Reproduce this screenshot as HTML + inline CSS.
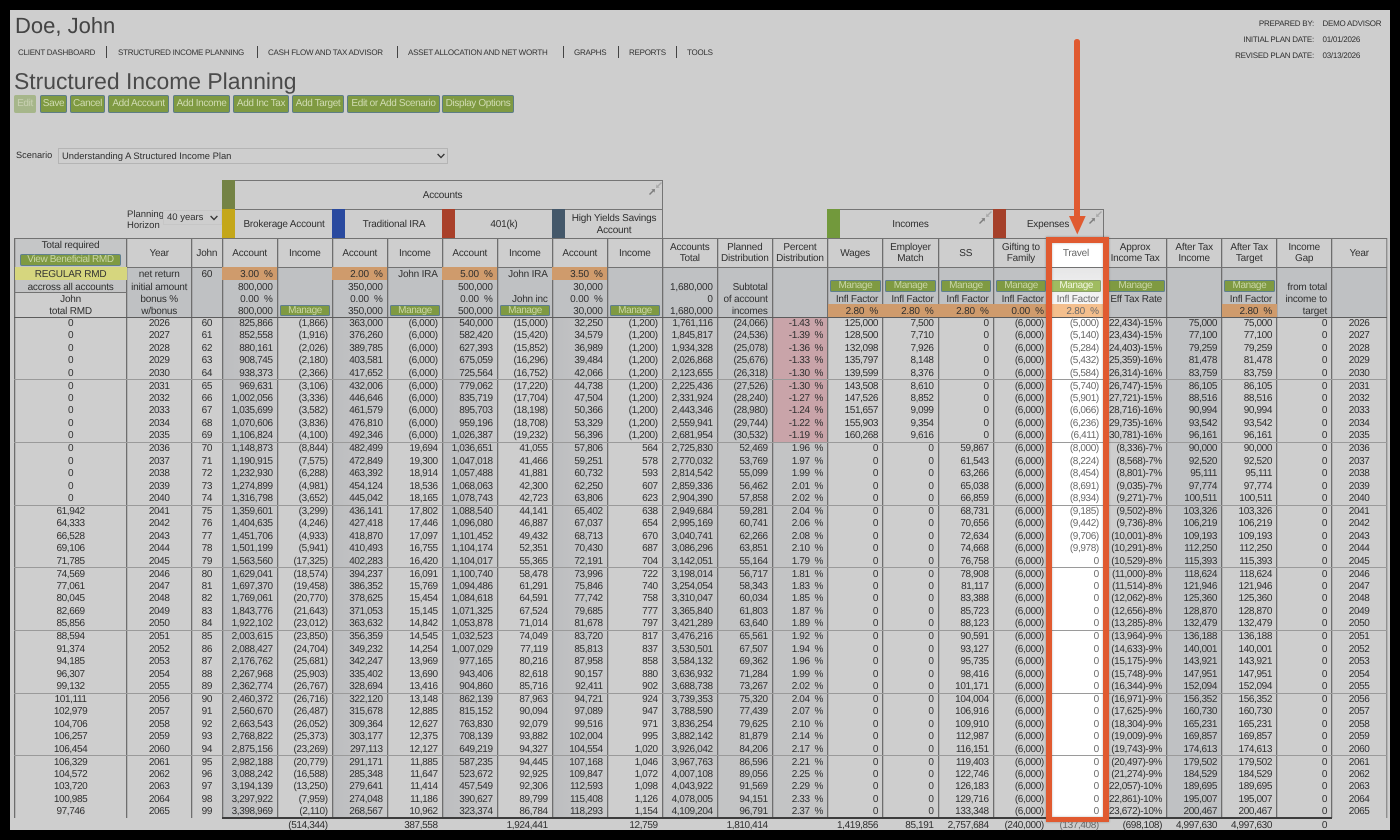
<!DOCTYPE html>
<html><head><meta charset="utf-8"><title>Structured Income Planning</title>
<style>
html,body{margin:0;padding:0;background:#000;width:1400px;height:840px;overflow:hidden}
body{font-family:"Liberation Sans",Arial,sans-serif;color:#2f2f2f;position:relative;text-rendering:geometricPrecision}
#p{position:absolute;left:10px;top:10px;width:1380px;height:820px;background:#cecece}
.a{position:absolute;white-space:nowrap}
.btn{position:absolute;top:95px;height:18px;box-sizing:border-box;background:#7f9a42;border:1px solid #5d7d86;border-radius:2px;color:#d0dbb2;font-size:10px;letter-spacing:-.35px;line-height:16px;text-align:center;white-space:nowrap}
.nav{position:absolute;top:47px;font-size:8px;letter-spacing:-.25px;line-height:11px;color:#333;white-space:nowrap}
.sep{position:absolute;top:46px;width:1px;height:12px;background:#444}
.bg{position:absolute}
.v{position:absolute;top:238px;height:580px;width:1px;background:#6e6e6e;box-shadow:.6px 0 0 rgba(110,110,110,.45)}
.hl{position:absolute;left:14px;width:1373px;height:1px;background:#727272}
.dv{position:absolute;left:14px;width:1373px;height:1px;background:#9a9a9a}
.g,.h{position:absolute;left:14.5px;width:1372.2px;display:grid;grid-template-columns:112.2px 65px 30.3px 55.3px 55px 55px 55px 55px 55px 55px 55px 55px 55px 55.3px 55.1px 55.5px 55.1px 55.2px 55px 63.2px 55px 55px 55px 55px;text-align:right}
.g{grid-auto-rows:12.4px;line-height:14px;font-size:10px;letter-spacing:-.38px}
.g>i,.h>i{font-style:normal;box-sizing:border-box;padding-right:4.6px;white-space:nowrap;min-width:0}
.g>i:nth-child(24n+1),.g>i:nth-child(24n+2),.g>i:nth-child(24n+3),.g>i:nth-child(24n){text-align:center;padding:0}
.g>i:nth-child(24n+19){color:#696969}
.g.f{letter-spacing:-.2px;line-height:15px}
.o{background:#cf9b6c}
.ob{background:#f4bf8d}
.y{background:#d6d67e;color:#333}
.g>i.m{padding:0}
.m b{display:block;font-weight:400;height:11.4px;line-height:10px;box-sizing:border-box;margin:.5px 2px 0 2.5px;background:#7f9a42;border:1px solid #5f7f8f;border-radius:1.5px;color:#c9d6a6;text-align:center;font-size:10px;letter-spacing:-.4px}
.m.t b{background:#a0bc60;border-color:#8aa06a;color:#f0f5df}
.h{top:239px;grid-template-rows:28.8px;font-size:10px;letter-spacing:-.2px;line-height:11.4px}
.h>i{display:flex;align-items:center;justify-content:center;text-align:center;padding:0}
.cap{position:absolute;box-sizing:border-box;border:1px solid #757575;background:#cecece;font-size:10px;letter-spacing:-.2px;line-height:11.4px;text-align:center;display:flex;align-items:center;justify-content:center;padding-top:1px}
.bar{position:absolute;width:13px}
.pr{font-size:8px;letter-spacing:-.25px;line-height:11px}
svg{position:absolute;overflow:visible}
</style></head><body>
<div id="p"></div>

<div class="a" style="left:15px;top:13px;font-size:22px;line-height:26px;color:#444">Doe, John</div>
<div class="nav" style="left:18px">CLIENT DASHBOARD</div><div class="sep" style="left:106px"></div>
<div class="nav" style="left:118px">STRUCTURED INCOME PLANNING</div><div class="sep" style="left:257px"></div>
<div class="nav" style="left:268px">CASH FLOW AND TAX ADVISOR</div><div class="sep" style="left:397px"></div>
<div class="nav" style="left:408px">ASSET ALLOCATION AND NET WORTH</div><div class="sep" style="left:563px"></div>
<div class="nav" style="left:574px">GRAPHS</div><div class="sep" style="left:618px"></div>
<div class="nav" style="left:629px">REPORTS</div><div class="sep" style="left:676px"></div>
<div class="nav" style="left:687px">TOOLS</div>

<div class="a pr" style="right:86px;top:18px">PREPARED BY:</div>
<div class="a pr" style="left:1322.5px;top:18px">DEMO ADVISOR</div>
<div class="a pr" style="right:86px;top:34px">INITIAL PLAN DATE:</div>
<div class="a pr" style="left:1322.5px;top:34px">01/01/2026</div>
<div class="a pr" style="right:86px;top:50px">REVISED PLAN DATE:</div>
<div class="a pr" style="left:1322.5px;top:50px">03/13/2026</div>

<div class="a" style="left:14px;top:68px;font-size:22.9px;line-height:27px;color:#4a4a4a">Structured Income Planning</div>

<div class="btn" style="left:14px;width:22px;background:#a6b68a;border-color:#a6b68a;color:#c9d1b3">Edit</div>
<div class="btn" style="left:40px;width:27px">Save</div>
<div class="btn" style="left:70px;width:35px">Cancel</div>
<div class="btn" style="left:108px;width:61px">Add Account</div>
<div class="btn" style="left:173px;width:57px">Add Income</div>
<div class="btn" style="left:233px;width:56px">Add Inc Tax</div>
<div class="btn" style="left:292px;width:52px">Add Target</div>
<div class="btn" style="left:347px;width:93px">Edit or Add Scenario</div>
<div class="btn" style="left:442px;width:72px">Display Options</div>

<div class="a" style="left:16px;top:149px;font-size:9.2px;line-height:12px">Scenario</div>
<div class="a" style="left:58px;top:148px;width:390px;height:16px;box-sizing:border-box;border:1px solid #b4b4b4;font-size:9.4px;line-height:14px;padding-left:3px">Understanding A Structured Income Plan</div>
<svg style="left:437px;top:153px" width="8" height="6" viewBox="0 0 8 6"><path d="M.6 1 L4 4.6 L7.4 1" fill="none" stroke="#333" stroke-width="1.3"/></svg>

<div class="a" style="left:127px;top:209px;font-size:9.5px;line-height:11.2px">Planning<br>Horizon</div>
<div class="a" style="left:163px;top:210px;width:59px;height:15px;box-sizing:border-box;border:1px solid #c6c6c6;font-size:9.5px;line-height:13px;padding-left:3px">40 years</div>
<svg style="left:210px;top:215px" width="8" height="6" viewBox="0 0 8 6"><path d="M.6 1 L4 4.6 L7.4 1" fill="none" stroke="#333" stroke-width="1.3"/></svg>

<!-- group captions -->
<div class="cap" style="left:222px;top:180px;width:441px;height:30px">Accounts</div>
<div class="cap" style="left:222px;top:209px;width:111px;height:30px;padding-left:13px">Brokerage Account</div>
<div class="cap" style="left:332px;top:209px;width:111px;height:30px;padding-left:13px">Traditional IRA</div>
<div class="cap" style="left:442px;top:209px;width:111px;height:30px;padding-left:13px">401(k)</div>
<div class="cap" style="left:552px;top:209px;width:111px;height:30px;padding-left:13px">High Yields Savings<br>Account</div>
<div class="cap" style="left:827px;top:209px;width:167px;height:30px">Incomes</div>
<div class="cap" style="left:993px;top:209px;width:111px;height:30px;padding-left:13px;padding-right:14px">Expenses</div>
<div class="bar" style="left:222px;top:180px;height:29px;background:#748345"></div>
<div class="bar" style="left:222px;top:209px;height:29px;background:#c4a71a"></div>
<div class="bar" style="left:332px;top:209px;height:29px;background:#2a4a9f"></div>
<div class="bar" style="left:442px;top:209px;height:29px;background:#a9402a"></div>
<div class="bar" style="left:552px;top:209px;height:29px;background:#44586a"></div>
<div class="bar" style="left:827px;top:209px;height:29px;background:#72993c"></div>
<div class="bar" style="left:993px;top:209px;height:29px;background:#a5402a"></div>
<svg style="left:648.5px;top:182px" width="13" height="13" viewBox="0 0 13 13"><path d="M.5 12.5L4 9" stroke="#7d7d7d" stroke-width="1.4" fill="none"/><path d="M6 7L2.4 7.4L5.6 10.6Z" fill="#7d7d7d"/><path d="M12.5 .5L9 4" stroke="#a8a8a8" stroke-width="1.4" fill="none"/><path d="M7 6L10.6 5.6L7.4 2.4Z" fill="#a8a8a8"/></svg>
<svg style="left:979px;top:211px" width="13" height="13" viewBox="0 0 13 13"><path d="M.5 12.5L4 9" stroke="#7d7d7d" stroke-width="1.4" fill="none"/><path d="M6 7L2.4 7.4L5.6 10.6Z" fill="#7d7d7d"/><path d="M12.5 .5L9 4" stroke="#a8a8a8" stroke-width="1.4" fill="none"/><path d="M7 6L10.6 5.6L7.4 2.4Z" fill="#a8a8a8"/></svg>
<svg style="left:1088.5px;top:211px" width="13" height="13" viewBox="0 0 13 13"><path d="M.5 12.5L4 9" stroke="#7d7d7d" stroke-width="1.4" fill="none"/><path d="M6 7L2.4 7.4L5.6 10.6Z" fill="#7d7d7d"/><path d="M12.5 .5L9 4" stroke="#a8a8a8" stroke-width="1.4" fill="none"/><path d="M7 6L10.6 5.6L7.4 2.4Z" fill="#a8a8a8"/></svg>

<!-- table backgrounds -->
<div class="bg" style="left:14px;top:238px;width:113px;height:29px;background:#c5c6c7"></div>
<div class="bg" style="left:127px;top:267px;width:1260px;height:50px;background:#bfc1c3"></div>
<div class="bg" style="left:14px;top:279px;width:113px;height:13px;background:#c3c4c5"></div>
<div class="bg" style="left:222px;top:317px;width:55px;height:501px;background:linear-gradient(90deg,#bcbdbf,#c8c9ca)"></div>
<div class="bg" style="left:332px;top:317px;width:55px;height:501px;background:linear-gradient(90deg,#bcbdbf,#c8c9ca)"></div>
<div class="bg" style="left:442px;top:317px;width:55px;height:501px;background:linear-gradient(90deg,#bcbdbf,#c8c9ca)"></div>
<div class="bg" style="left:552px;top:317px;width:55px;height:501px;background:linear-gradient(90deg,#bcbdbf,#c8c9ca)"></div>
<div class="bg" style="left:662px;top:317px;width:165px;height:501px;background:#c3c4c5"></div>
<div class="bg" style="left:772px;top:317px;width:55px;height:125px;background:#c9a4a9"></div>
<div class="bg" style="left:1167px;top:317px;width:55px;height:501px;background:#bfc1c3"></div>

<!-- travel highlight -->
<div class="bg" style="left:1049px;top:238px;width:55px;height:580px;background:#fff"></div>
<div class="bg" style="left:1049px;top:267px;width:55px;height:38px;background:linear-gradient(#e6e6e7,#f6f6f6)"></div>

<!-- grid lines -->
<div class="v" style="left:14px"></div><div class="v" style="left:126px"></div><div class="v" style="left:191px"></div><div class="v" style="left:222px"></div><div class="v" style="left:277px"></div><div class="v" style="left:332px"></div><div class="v" style="left:387px"></div><div class="v" style="left:442px"></div><div class="v" style="left:497px"></div><div class="v" style="left:552px"></div><div class="v" style="left:607px"></div><div class="v" style="left:662px"></div><div class="v" style="left:717px"></div><div class="v" style="left:772px"></div><div class="v" style="left:827px"></div><div class="v" style="left:882px"></div><div class="v" style="left:938px"></div><div class="v" style="left:993px"></div><div class="v" style="left:1166px"></div><div class="v" style="left:1221px"></div><div class="v" style="left:1276px"></div><div class="v" style="left:1331px"></div><div class="v" style="left:1386px;background:#8f8f8f"></div>
<div class="hl" style="top:238px"></div>
<div class="hl" style="top:267px"></div>
<div class="hl" style="top:317px;background:#5c5c5c"></div>
<div class="bg" style="left:14px;top:292px;width:113px;height:1px;background:#727272"></div>
<div class="dv" style="top:379px"></div><div class="dv" style="top:442px"></div><div class="dv" style="top:505px"></div><div class="dv" style="top:567px"></div><div class="dv" style="top:630px"></div><div class="dv" style="top:693px"></div><div class="dv" style="top:755px"></div>
<div class="bg" style="left:222px;top:817px;width:1110px;height:2px;background:#3c3c3c"></div>

<!-- col 1 header -->
<div class="a" style="left:14px;width:113px;top:240px;text-align:center;font-size:10px;letter-spacing:-.2px;line-height:12px">Total required</div>
<div class="btn" style="left:20px;top:254px;width:101px;height:12px;line-height:10px;border-color:#5f7f8f;color:#c9d6a6">View Beneficial RMD</div>

<!-- column headers -->
<div class="h">
<i></i><i>Year</i><i>John</i><i>Account</i><i>Income</i><i>Account</i><i>Income</i><i>Account</i><i>Income</i><i>Account</i><i>Income</i><i>Accounts<br>Total</i><i>Planned<br>Distribution</i><i>Percent<br>Distribution</i><i>Wages</i><i>Employer<br>Match</i><i>SS</i><i>Gifting to<br>Family</i><i style="color:#666">Travel</i><i>Approx<br>Income Tax</i><i>After Tax<br>Income</i><i>After Tax<br>Target</i><i>Income<br>Gap</i><i>Year</i>
</div>

<!-- header data rows -->
<div class="g f" style="top:267.3px">
<i class="y">REGULAR RMD</i><i>net return</i><i>60</i><i class="o">3.00&nbsp;&nbsp;%</i><i></i><i class="o">2.00&nbsp;&nbsp;%</i><i>John IRA</i><i class="o">5.00&nbsp;&nbsp;%</i><i>John IRA</i><i class="o">3.50&nbsp;&nbsp;%</i><i></i><i></i><i></i><i></i><i></i><i></i><i></i><i></i><i></i><i></i><i></i><i></i><i></i><i></i>
<i>accross all accounts</i><i>initial amount</i><i></i><i>800,000</i><i></i><i>350,000</i><i></i><i>500,000</i><i></i><i>30,000</i><i></i><i>1,680,000</i><i>Subtotal</i><i></i><i class="m"><b>Manage</b></i><i class="m"><b>Manage</b></i><i class="m"><b>Manage</b></i><i class="m"><b>Manage</b></i><i class="m t"><b>Manage</b></i><i class="m"><b>Manage</b></i><i></i><i class="m"><b>Manage</b></i><i>from total</i><i></i>
<i>John</i><i>bonus %</i><i></i><i>0.00&nbsp;&nbsp;%</i><i></i><i>0.00&nbsp;&nbsp;%</i><i></i><i>0.00&nbsp;&nbsp;%</i><i>John inc</i><i>0.00&nbsp;&nbsp;%</i><i></i><i>0</i><i>of account</i><i></i><i>Infl Factor</i><i>Infl Factor</i><i>Infl Factor</i><i>Infl Factor</i><i>Infl Factor</i><i>Eff Tax Rate</i><i></i><i>Infl Factor</i><i>income to</i><i></i>
<i>total RMD</i><i>w/bonus</i><i></i><i>800,000</i><i class="m"><b>Manage</b></i><i>350,000</i><i class="m"><b>Manage</b></i><i>500,000</i><i class="m"><b>Manage</b></i><i>30,000</i><i class="m"><b>Manage</b></i><i>1,680,000</i><i>incomes</i><i></i><i class="o">2.80&nbsp;&nbsp;%</i><i class="o">2.80&nbsp;&nbsp;%</i><i class="o">2.80&nbsp;&nbsp;%</i><i class="o">0.00&nbsp;&nbsp;%</i><i class="ob">2.80&nbsp;&nbsp;%</i><i></i><i></i><i class="o">2.80&nbsp;&nbsp;%</i><i>target</i><i></i>
</div>

<!-- data -->
<div class="g" style="top:317px">
<i>0</i><i>2026</i><i>60</i><i>825,866</i><i>(1,866)</i><i>363,000</i><i>(6,000)</i><i>540,000</i><i>(15,000)</i><i>32,250</i><i>(1,200)</i><i>1,761,116</i><i>(24,066)</i><i>-1.43&nbsp;&nbsp;%</i><i>125,000</i><i>7,500</i><i>0</i><i>(6,000)</i><i>(5,000)</i><i>(22,434)-15%</i><i>75,000</i><i>75,000</i><i>0</i><i>2026</i>
<i>0</i><i>2027</i><i>61</i><i>852,558</i><i>(1,916)</i><i>376,260</i><i>(6,000)</i><i>582,420</i><i>(15,420)</i><i>34,579</i><i>(1,200)</i><i>1,845,817</i><i>(24,536)</i><i>-1.39&nbsp;&nbsp;%</i><i>128,500</i><i>7,710</i><i>0</i><i>(6,000)</i><i>(5,140)</i><i>(23,434)-15%</i><i>77,100</i><i>77,100</i><i>0</i><i>2027</i>
<i>0</i><i>2028</i><i>62</i><i>880,161</i><i>(2,026)</i><i>389,785</i><i>(6,000)</i><i>627,393</i><i>(15,852)</i><i>36,989</i><i>(1,200)</i><i>1,934,328</i><i>(25,078)</i><i>-1.36&nbsp;&nbsp;%</i><i>132,098</i><i>7,926</i><i>0</i><i>(6,000)</i><i>(5,284)</i><i>(24,403)-15%</i><i>79,259</i><i>79,259</i><i>0</i><i>2028</i>
<i>0</i><i>2029</i><i>63</i><i>908,745</i><i>(2,180)</i><i>403,581</i><i>(6,000)</i><i>675,059</i><i>(16,296)</i><i>39,484</i><i>(1,200)</i><i>2,026,868</i><i>(25,676)</i><i>-1.33&nbsp;&nbsp;%</i><i>135,797</i><i>8,148</i><i>0</i><i>(6,000)</i><i>(5,432)</i><i>(25,359)-16%</i><i>81,478</i><i>81,478</i><i>0</i><i>2029</i>
<i>0</i><i>2030</i><i>64</i><i>938,373</i><i>(2,366)</i><i>417,652</i><i>(6,000)</i><i>725,564</i><i>(16,752)</i><i>42,066</i><i>(1,200)</i><i>2,123,655</i><i>(26,318)</i><i>-1.30&nbsp;&nbsp;%</i><i>139,599</i><i>8,376</i><i>0</i><i>(6,000)</i><i>(5,584)</i><i>(26,314)-16%</i><i>83,759</i><i>83,759</i><i>0</i><i>2030</i>
</div>
<div class="g" style="top:379.67px">
<i>0</i><i>2031</i><i>65</i><i>969,631</i><i>(3,106)</i><i>432,006</i><i>(6,000)</i><i>779,062</i><i>(17,220)</i><i>44,738</i><i>(1,200)</i><i>2,225,436</i><i>(27,526)</i><i>-1.30&nbsp;&nbsp;%</i><i>143,508</i><i>8,610</i><i>0</i><i>(6,000)</i><i>(5,740)</i><i>(26,747)-15%</i><i>86,105</i><i>86,105</i><i>0</i><i>2031</i>
<i>0</i><i>2032</i><i>66</i><i>1,002,056</i><i>(3,336)</i><i>446,646</i><i>(6,000)</i><i>835,719</i><i>(17,704)</i><i>47,504</i><i>(1,200)</i><i>2,331,924</i><i>(28,240)</i><i>-1.27&nbsp;&nbsp;%</i><i>147,526</i><i>8,852</i><i>0</i><i>(6,000)</i><i>(5,901)</i><i>(27,721)-15%</i><i>88,516</i><i>88,516</i><i>0</i><i>2032</i>
<i>0</i><i>2033</i><i>67</i><i>1,035,699</i><i>(3,582)</i><i>461,579</i><i>(6,000)</i><i>895,703</i><i>(18,198)</i><i>50,366</i><i>(1,200)</i><i>2,443,346</i><i>(28,980)</i><i>-1.24&nbsp;&nbsp;%</i><i>151,657</i><i>9,099</i><i>0</i><i>(6,000)</i><i>(6,066)</i><i>(28,716)-16%</i><i>90,994</i><i>90,994</i><i>0</i><i>2033</i>
<i>0</i><i>2034</i><i>68</i><i>1,070,606</i><i>(3,836)</i><i>476,810</i><i>(6,000)</i><i>959,196</i><i>(18,708)</i><i>53,329</i><i>(1,200)</i><i>2,559,941</i><i>(29,744)</i><i>-1.22&nbsp;&nbsp;%</i><i>155,903</i><i>9,354</i><i>0</i><i>(6,000)</i><i>(6,236)</i><i>(29,735)-16%</i><i>93,542</i><i>93,542</i><i>0</i><i>2034</i>
<i>0</i><i>2035</i><i>69</i><i>1,106,824</i><i>(4,100)</i><i>492,346</i><i>(6,000)</i><i>1,026,387</i><i>(19,232)</i><i>56,396</i><i>(1,200)</i><i>2,681,954</i><i>(30,532)</i><i>-1.19&nbsp;&nbsp;%</i><i>160,268</i><i>9,616</i><i>0</i><i>(6,000)</i><i>(6,411)</i><i>(30,781)-16%</i><i>96,161</i><i>96,161</i><i>0</i><i>2035</i>
</div>
<div class="g" style="top:442.34px">
<i>0</i><i>2036</i><i>70</i><i>1,148,873</i><i>(8,844)</i><i>482,499</i><i>19,694</i><i>1,036,651</i><i>41,055</i><i>57,806</i><i>564</i><i>2,725,830</i><i>52,469</i><i>1.96&nbsp;&nbsp;%</i><i>0</i><i>0</i><i>59,867</i><i>(6,000)</i><i>(8,000)</i><i>(8,336)-7%</i><i>90,000</i><i>90,000</i><i>0</i><i>2036</i>
<i>0</i><i>2037</i><i>71</i><i>1,190,915</i><i>(7,575)</i><i>472,849</i><i>19,300</i><i>1,047,018</i><i>41,466</i><i>59,251</i><i>578</i><i>2,770,032</i><i>53,769</i><i>1.97&nbsp;&nbsp;%</i><i>0</i><i>0</i><i>61,543</i><i>(6,000)</i><i>(8,224)</i><i>(8,568)-7%</i><i>92,520</i><i>92,520</i><i>0</i><i>2037</i>
<i>0</i><i>2038</i><i>72</i><i>1,232,930</i><i>(6,288)</i><i>463,392</i><i>18,914</i><i>1,057,488</i><i>41,881</i><i>60,732</i><i>593</i><i>2,814,542</i><i>55,099</i><i>1.99&nbsp;&nbsp;%</i><i>0</i><i>0</i><i>63,266</i><i>(6,000)</i><i>(8,454)</i><i>(8,801)-7%</i><i>95,111</i><i>95,111</i><i>0</i><i>2038</i>
<i>0</i><i>2039</i><i>73</i><i>1,274,899</i><i>(4,981)</i><i>454,124</i><i>18,536</i><i>1,068,063</i><i>42,300</i><i>62,250</i><i>607</i><i>2,859,336</i><i>56,462</i><i>2.01&nbsp;&nbsp;%</i><i>0</i><i>0</i><i>65,038</i><i>(6,000)</i><i>(8,691)</i><i>(9,035)-7%</i><i>97,774</i><i>97,774</i><i>0</i><i>2039</i>
<i>0</i><i>2040</i><i>74</i><i>1,316,798</i><i>(3,652)</i><i>445,042</i><i>18,165</i><i>1,078,743</i><i>42,723</i><i>63,806</i><i>623</i><i>2,904,390</i><i>57,858</i><i>2.02&nbsp;&nbsp;%</i><i>0</i><i>0</i><i>66,859</i><i>(6,000)</i><i>(8,934)</i><i>(9,271)-7%</i><i>100,511</i><i>100,511</i><i>0</i><i>2040</i>
</div>
<div class="g" style="top:505px">
<i>61,942</i><i>2041</i><i>75</i><i>1,359,601</i><i>(3,299)</i><i>436,141</i><i>17,802</i><i>1,088,540</i><i>44,141</i><i>65,402</i><i>638</i><i>2,949,684</i><i>59,281</i><i>2.04&nbsp;&nbsp;%</i><i>0</i><i>0</i><i>68,731</i><i>(6,000)</i><i>(9,185)</i><i>(9,502)-8%</i><i>103,326</i><i>103,326</i><i>0</i><i>2041</i>
<i>64,333</i><i>2042</i><i>76</i><i>1,404,635</i><i>(4,246)</i><i>427,418</i><i>17,446</i><i>1,096,080</i><i>46,887</i><i>67,037</i><i>654</i><i>2,995,169</i><i>60,741</i><i>2.06&nbsp;&nbsp;%</i><i>0</i><i>0</i><i>70,656</i><i>(6,000)</i><i>(9,442)</i><i>(9,736)-8%</i><i>106,219</i><i>106,219</i><i>0</i><i>2042</i>
<i>66,528</i><i>2043</i><i>77</i><i>1,451,706</i><i>(4,933)</i><i>418,870</i><i>17,097</i><i>1,101,452</i><i>49,432</i><i>68,713</i><i>670</i><i>3,040,741</i><i>62,266</i><i>2.08&nbsp;&nbsp;%</i><i>0</i><i>0</i><i>72,634</i><i>(6,000)</i><i>(9,706)</i><i>(10,001)-8%</i><i>109,193</i><i>109,193</i><i>0</i><i>2043</i>
<i>69,106</i><i>2044</i><i>78</i><i>1,501,199</i><i>(5,941)</i><i>410,493</i><i>16,755</i><i>1,104,174</i><i>52,351</i><i>70,430</i><i>687</i><i>3,086,296</i><i>63,851</i><i>2.10&nbsp;&nbsp;%</i><i>0</i><i>0</i><i>74,668</i><i>(6,000)</i><i>(9,978)</i><i>(10,291)-8%</i><i>112,250</i><i>112,250</i><i>0</i><i>2044</i>
<i>71,785</i><i>2045</i><i>79</i><i>1,563,560</i><i>(17,325)</i><i>402,283</i><i>16,420</i><i>1,104,017</i><i>55,365</i><i>72,191</i><i>704</i><i>3,142,051</i><i>55,164</i><i>1.79&nbsp;&nbsp;%</i><i>0</i><i>0</i><i>76,758</i><i>(6,000)</i><i>0</i><i>(10,529)-8%</i><i>115,393</i><i>115,393</i><i>0</i><i>2045</i>
</div>
<div class="g" style="top:567.68px">
<i>74,569</i><i>2046</i><i>80</i><i>1,629,041</i><i>(18,574)</i><i>394,237</i><i>16,091</i><i>1,100,740</i><i>58,478</i><i>73,996</i><i>722</i><i>3,198,014</i><i>56,717</i><i>1.81&nbsp;&nbsp;%</i><i>0</i><i>0</i><i>78,908</i><i>(6,000)</i><i>0</i><i>(11,000)-8%</i><i>118,624</i><i>118,624</i><i>0</i><i>2046</i>
<i>77,061</i><i>2047</i><i>81</i><i>1,697,370</i><i>(19,458)</i><i>386,352</i><i>15,769</i><i>1,094,486</i><i>61,291</i><i>75,846</i><i>740</i><i>3,254,054</i><i>58,343</i><i>1.83&nbsp;&nbsp;%</i><i>0</i><i>0</i><i>81,117</i><i>(6,000)</i><i>0</i><i>(11,514)-8%</i><i>121,946</i><i>121,946</i><i>0</i><i>2047</i>
<i>80,045</i><i>2048</i><i>82</i><i>1,769,061</i><i>(20,770)</i><i>378,625</i><i>15,454</i><i>1,084,618</i><i>64,591</i><i>77,742</i><i>758</i><i>3,310,047</i><i>60,034</i><i>1.85&nbsp;&nbsp;%</i><i>0</i><i>0</i><i>83,388</i><i>(6,000)</i><i>0</i><i>(12,062)-8%</i><i>125,360</i><i>125,360</i><i>0</i><i>2048</i>
<i>82,669</i><i>2049</i><i>83</i><i>1,843,776</i><i>(21,643)</i><i>371,053</i><i>15,145</i><i>1,071,325</i><i>67,524</i><i>79,685</i><i>777</i><i>3,365,840</i><i>61,803</i><i>1.87&nbsp;&nbsp;%</i><i>0</i><i>0</i><i>85,723</i><i>(6,000)</i><i>0</i><i>(12,656)-8%</i><i>128,870</i><i>128,870</i><i>0</i><i>2049</i>
<i>85,856</i><i>2050</i><i>84</i><i>1,922,102</i><i>(23,012)</i><i>363,632</i><i>14,842</i><i>1,053,878</i><i>71,014</i><i>81,678</i><i>797</i><i>3,421,289</i><i>63,640</i><i>1.89&nbsp;&nbsp;%</i><i>0</i><i>0</i><i>88,123</i><i>(6,000)</i><i>0</i><i>(13,285)-8%</i><i>132,479</i><i>132,479</i><i>0</i><i>2050</i>
</div>
<div class="g" style="top:630.35px">
<i>88,594</i><i>2051</i><i>85</i><i>2,003,615</i><i>(23,850)</i><i>356,359</i><i>14,545</i><i>1,032,523</i><i>74,049</i><i>83,720</i><i>817</i><i>3,476,216</i><i>65,561</i><i>1.92&nbsp;&nbsp;%</i><i>0</i><i>0</i><i>90,591</i><i>(6,000)</i><i>0</i><i>(13,964)-9%</i><i>136,188</i><i>136,188</i><i>0</i><i>2051</i>
<i>91,374</i><i>2052</i><i>86</i><i>2,088,427</i><i>(24,704)</i><i>349,232</i><i>14,254</i><i>1,007,029</i><i>77,119</i><i>85,813</i><i>837</i><i>3,530,501</i><i>67,507</i><i>1.94&nbsp;&nbsp;%</i><i>0</i><i>0</i><i>93,127</i><i>(6,000)</i><i>0</i><i>(14,633)-9%</i><i>140,001</i><i>140,001</i><i>0</i><i>2052</i>
<i>94,185</i><i>2053</i><i>87</i><i>2,176,762</i><i>(25,681)</i><i>342,247</i><i>13,969</i><i>977,165</i><i>80,216</i><i>87,958</i><i>858</i><i>3,584,132</i><i>69,362</i><i>1.96&nbsp;&nbsp;%</i><i>0</i><i>0</i><i>95,735</i><i>(6,000)</i><i>0</i><i>(15,175)-9%</i><i>143,921</i><i>143,921</i><i>0</i><i>2053</i>
<i>96,307</i><i>2054</i><i>88</i><i>2,267,968</i><i>(25,903)</i><i>335,402</i><i>13,690</i><i>943,406</i><i>82,618</i><i>90,157</i><i>880</i><i>3,636,932</i><i>71,284</i><i>1.99&nbsp;&nbsp;%</i><i>0</i><i>0</i><i>98,416</i><i>(6,000)</i><i>0</i><i>(15,748)-9%</i><i>147,951</i><i>147,951</i><i>0</i><i>2054</i>
<i>99,132</i><i>2055</i><i>89</i><i>2,362,774</i><i>(26,767)</i><i>328,694</i><i>13,416</i><i>904,860</i><i>85,716</i><i>92,411</i><i>902</i><i>3,688,738</i><i>73,267</i><i>2.02&nbsp;&nbsp;%</i><i>0</i><i>0</i><i>101,171</i><i>(6,000)</i><i>0</i><i>(16,344)-9%</i><i>152,094</i><i>152,094</i><i>0</i><i>2055</i>
</div>
<div class="g" style="top:693px">
<i>101,111</i><i>2056</i><i>90</i><i>2,460,372</i><i>(26,716)</i><i>322,120</i><i>13,148</i><i>862,139</i><i>87,963</i><i>94,721</i><i>924</i><i>3,739,353</i><i>75,320</i><i>2.04&nbsp;&nbsp;%</i><i>0</i><i>0</i><i>104,004</i><i>(6,000)</i><i>0</i><i>(16,971)-9%</i><i>156,352</i><i>156,352</i><i>0</i><i>2056</i>
<i>102,979</i><i>2057</i><i>91</i><i>2,560,670</i><i>(26,487)</i><i>315,678</i><i>12,885</i><i>815,152</i><i>90,094</i><i>97,089</i><i>947</i><i>3,788,590</i><i>77,439</i><i>2.07&nbsp;&nbsp;%</i><i>0</i><i>0</i><i>106,916</i><i>(6,000)</i><i>0</i><i>(17,625)-9%</i><i>160,730</i><i>160,730</i><i>0</i><i>2057</i>
<i>104,706</i><i>2058</i><i>92</i><i>2,663,543</i><i>(26,052)</i><i>309,364</i><i>12,627</i><i>763,830</i><i>92,079</i><i>99,516</i><i>971</i><i>3,836,254</i><i>79,625</i><i>2.10&nbsp;&nbsp;%</i><i>0</i><i>0</i><i>109,910</i><i>(6,000)</i><i>0</i><i>(18,304)-9%</i><i>165,231</i><i>165,231</i><i>0</i><i>2058</i>
<i>106,257</i><i>2059</i><i>93</i><i>2,768,822</i><i>(25,373)</i><i>303,177</i><i>12,375</i><i>708,139</i><i>93,882</i><i>102,004</i><i>995</i><i>3,882,142</i><i>81,879</i><i>2.14&nbsp;&nbsp;%</i><i>0</i><i>0</i><i>112,987</i><i>(6,000)</i><i>0</i><i>(19,009)-9%</i><i>169,857</i><i>169,857</i><i>0</i><i>2059</i>
<i>106,454</i><i>2060</i><i>94</i><i>2,875,156</i><i>(23,269)</i><i>297,113</i><i>12,127</i><i>649,219</i><i>94,327</i><i>104,554</i><i>1,020</i><i>3,926,042</i><i>84,206</i><i>2.17&nbsp;&nbsp;%</i><i>0</i><i>0</i><i>116,151</i><i>(6,000)</i><i>0</i><i>(19,743)-9%</i><i>174,613</i><i>174,613</i><i>0</i><i>2060</i>
</div>
<div class="g" style="top:755.7px">
<i>106,329</i><i>2061</i><i>95</i><i>2,982,188</i><i>(20,779)</i><i>291,171</i><i>11,885</i><i>587,235</i><i>94,445</i><i>107,168</i><i>1,046</i><i>3,967,763</i><i>86,596</i><i>2.21&nbsp;&nbsp;%</i><i>0</i><i>0</i><i>119,403</i><i>(6,000)</i><i>0</i><i>(20,497)-9%</i><i>179,502</i><i>179,502</i><i>0</i><i>2061</i>
<i>104,572</i><i>2062</i><i>96</i><i>3,088,242</i><i>(16,588)</i><i>285,348</i><i>11,647</i><i>523,672</i><i>92,925</i><i>109,847</i><i>1,072</i><i>4,007,108</i><i>89,056</i><i>2.25&nbsp;&nbsp;%</i><i>0</i><i>0</i><i>122,746</i><i>(6,000)</i><i>0</i><i>(21,274)-9%</i><i>184,529</i><i>184,529</i><i>0</i><i>2062</i>
<i>103,720</i><i>2063</i><i>97</i><i>3,194,139</i><i>(13,250)</i><i>279,641</i><i>11,414</i><i>457,549</i><i>92,306</i><i>112,593</i><i>1,098</i><i>4,043,922</i><i>91,569</i><i>2.29&nbsp;&nbsp;%</i><i>0</i><i>0</i><i>126,183</i><i>(6,000)</i><i>0</i><i>(22,057)-10%</i><i>189,695</i><i>189,695</i><i>0</i><i>2063</i>
<i>100,985</i><i>2064</i><i>98</i><i>3,297,922</i><i>(7,959)</i><i>274,048</i><i>11,186</i><i>390,627</i><i>89,799</i><i>115,408</i><i>1,126</i><i>4,078,005</i><i>94,151</i><i>2.33&nbsp;&nbsp;%</i><i>0</i><i>0</i><i>129,716</i><i>(6,000)</i><i>0</i><i>(22,861)-10%</i><i>195,007</i><i>195,007</i><i>0</i><i>2064</i>
<i>97,746</i><i>2065</i><i>99</i><i>3,398,969</i><i>(2,110)</i><i>268,567</i><i>10,962</i><i>323,374</i><i>86,784</i><i>118,293</i><i>1,154</i><i>4,109,204</i><i>96,791</i><i>2.37&nbsp;&nbsp;%</i><i>0</i><i>0</i><i>133,348</i><i>(6,000)</i><i>0</i><i>(23,672)-10%</i><i>200,467</i><i>200,467</i><i>0</i><i>2065</i>
</div>
<div class="bg" style="left:10px;top:819px;width:1380px;height:11px;background:#cecece"></div>
<div class="g" style="top:818.6px">
<i></i><i></i><i></i><i></i><i>(514,344)</i><i></i><i>387,558</i><i></i><i>1,924,441</i><i></i><i>12,759</i><i></i><i>1,810,414</i><i></i><i>1,419,856</i><i>85,191</i><i>2,757,684</i><i>(240,000)</i><i>(137,408)</i><i>(698,108)</i><i>4,997,630</i><i>4,997,630</i><i>0</i><i></i>
</div>

<!-- red highlight box + arrow -->
<div class="bg" style="left:1046px;top:236.5px;width:63px;height:585px;box-sizing:border-box;border:solid #e05a30;border-width:6.5px 6px 5.5px 6px;box-shadow:0 0 2px rgba(60,60,60,.45),inset 0 0 2px rgba(60,60,60,.35)"></div>
<svg style="left:0;top:0" width="1400" height="840" viewBox="0 0 1400 840"><path d="M1074 216V41.5a3 2.5 0 0 1 6 0V216H1085.7L1077.3 234.5L1069 216Z" fill="#e05a30"/></svg>
</body></html>
